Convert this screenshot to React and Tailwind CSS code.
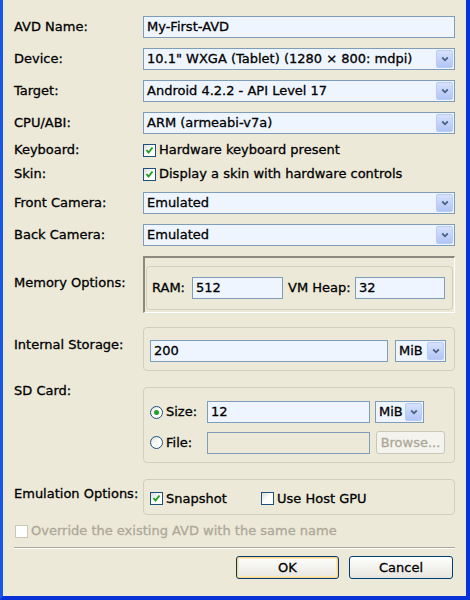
import React from "react";

function Chevron() {
  return (
    <svg width="8" height="6" viewBox="0 0 8 6">
      <path d="M1.2 1.5 L4 4.3 L6.8 1.5" fill="none" stroke="#4D6185" strokeWidth="1.8" />
    </svg>
  );
}

function Field({ value, className = "", disabled = false }) {
  return (
    <div
      className={`h-[22px] border border-[#7F9DB9] flex items-center px-[3px] overflow-hidden whitespace-nowrap ${
        disabled ? "bg-[#ECE9D8]" : "bg-[#EEF5FE]"
      } ${className}`}
    >
      {value}
    </div>
  );
}

function Combo({ value, className = "" }) {
  return (
    <div className={`h-[22px] border border-[#7F9DB9] bg-[#EEF5FE] flex items-stretch ${className}`}>
      <div className="flex-1 flex items-center px-[3px] overflow-hidden whitespace-nowrap">{value}</div>
      <div className="w-[17px] m-[1px] rounded-[2px] border border-[#B9CCF6] bg-gradient-to-b from-[#D6E2FD] to-[#B1C6F5] flex items-center justify-center">
        <Chevron />
      </div>
    </div>
  );
}

function Check({ checked = false, disabled = false }) {
  return (
    <div
      className={`w-[13px] h-[13px] shrink-0 border flex items-center justify-center ${
        disabled
          ? "border-[#CAC8BB] bg-white"
          : "border-[#1C5180] bg-gradient-to-br from-[#DCDBD5] via-white to-white"
      }`}
    >
      {checked && (
        <svg width="9" height="9" viewBox="0 0 9 9">
          <path d="M1.5 4 L3.5 6.5 L7.5 1.5" fill="none" stroke="#21A121" strokeWidth="2" />
        </svg>
      )}
    </div>
  );
}

function Radio({ checked = false }) {
  return (
    <div className="w-[13px] h-[13px] shrink-0 rounded-full border border-[#1C5180] bg-gradient-to-br from-[#DCDBD5] via-white to-white flex items-center justify-center">
      {checked && <div className="w-[5px] h-[5px] rounded-full bg-[#21A121]" />}
    </div>
  );
}

function Row({ label, children, className = "" }) {
  return (
    <div className={`flex items-center ${className}`}>
      <div className="w-[129px] shrink-0">{label}</div>
      <div className="flex-1">{children}</div>
    </div>
  );
}

export default function App() {
  return (
    <div className="w-[470px] h-[600px] bg-[#ECE9D8] border-l-[3px] border-l-[#1657E8] border-r-[4px] border-r-[#0832D8] border-b-[4px] border-b-[#0832D8] font-['DejaVu_Sans',sans-serif] text-[13px] text-black [-webkit-text-stroke:0.3px_currentColor] overflow-hidden">
      <div className="pl-[11px] pr-[11px] pt-[16px] flex flex-col">
        <Row label="AVD Name:">
          <Field value="My-First-AVD" />
        </Row>
        <Row label="Device:" className="mt-[10px]">
          <Combo value="10.1&quot; WXGA (Tablet) (1280 × 800: mdpi)" />
        </Row>
        <Row label="Target:" className="mt-[10px]">
          <Combo value="Android 4.2.2 - API Level 17" />
        </Row>
        <Row label="CPU/ABI:" className="mt-[10px]">
          <Combo value="ARM (armeabi-v7a)" />
        </Row>
        <Row label="Keyboard:" className="mt-[6px] h-[20px]">
          <div className="flex items-center gap-[3px]">
            <Check checked />
            <span>Hardware keyboard present</span>
          </div>
        </Row>
        <Row label="Skin:" className="mt-[4px] h-[20px]">
          <div className="flex items-center gap-[3px]">
            <Check checked />
            <span>Display a skin with hardware controls</span>
          </div>
        </Row>
        <Row label="Front Camera:" className="mt-[8px]">
          <Combo value="Emulated" />
        </Row>
        <Row label="Back Camera:" className="mt-[10px]">
          <Combo value="Emulated" />
        </Row>

        <Row label={<div className="-mt-[4px]">Memory Options:</div>} className="mt-[10px]">
          <div className="h-[57px] border-t-2 border-l-2 border-t-[#8C8A80] border-l-[#8C8A80] border-r border-b border-r-white border-b-white pt-[8px] px-[1px] pb-[2px]">
            <div className="h-full rounded-[4px] border border-[#D0D0BF] flex items-center pl-[5px] pr-[7px]">
              <span className="w-[40px] whitespace-nowrap">RAM:</span>
              <Field value="512" className="w-[91px]" />
              <span className="ml-[5px] w-[67px] whitespace-nowrap">VM Heap:</span>
              <Field value="32" className="flex-1" />
            </div>
          </div>
        </Row>

        <Row label={<div className="-mt-[8px]">Internal Storage:</div>} className="mt-[14px]">
          <div className="h-[44px] rounded-[4px] border border-[#D0D0BF] flex items-center pl-[6px] pr-[8px] pt-[4px]">
            <Field value="200" className="flex-1" />
            <Combo value="MiB" className="ml-[7px] w-[51px]" />
          </div>
        </Row>

        <div className="flex mt-[16px]">
          <div className="w-[129px] shrink-0 -mt-[6px]">SD Card:</div>
          <div className="flex-1 h-[76px] rounded-[4px] border border-[#D0D0BF] pl-[6px] pr-[9px] pt-[13px] flex flex-col gap-[8px]">
            <div className="flex items-center">
              <Radio checked />
              <span className="ml-[3px] w-[41px]">Size:</span>
              <Field value="12" className="w-[163px]" />
              <Combo value="MiB" className="ml-[5px] w-[49px]" />
            </div>
            <div className="flex items-center">
              <Radio />
              <span className="ml-[3px] w-[41px]">File:</span>
              <Field value="" disabled className="w-[163px]" />
              <div className="ml-[6px] flex-1 h-[23px] rounded-[3px] border border-[#C9C7BA] bg-[#F4F3EE] text-[#ACA899] flex items-center justify-center">
                Browse...
              </div>
            </div>
          </div>
        </div>

        <Row label={<div className="-mt-[6px]">Emulation Options:</div>} className="mt-[16px]">
          <div className="h-[36px] rounded-[4px] border border-[#D0D0BF] flex items-center pl-[6px] pt-[3px]">
            <Check checked />
            <span className="ml-[3px] w-[95px]">Snapshot</span>
            <Check />
            <span className="ml-[3px]">Use Host GPU</span>
          </div>
        </Row>

        <div className="mt-[9px] pl-[1px] flex items-center gap-[3px] text-[#ACA899] h-[14px]">
          <Check disabled />
          <span>Override the existing AVD with the same name</span>
        </div>

        <div className="mt-[9px] border-t border-t-[#ACA899] border-b border-b-white" />

        <div className="mt-[7px] flex justify-end gap-[10px] pr-[2px]">
          <div className="w-[103px] h-[23px] rounded-[3px] border border-[#003C74] bg-gradient-to-b from-white to-[#E6E5DE] shadow-[inset_0_0_0_1px_#F9D68C,inset_0_0_0_2px_#FCE7B6] flex items-center justify-center">
            OK
          </div>
          <div className="w-[104px] h-[23px] rounded-[3px] border border-[#003C74] bg-gradient-to-b from-white to-[#E6E5DE] flex items-center justify-center">
            Cancel
          </div>
        </div>
      </div>
    </div>
  );
}
